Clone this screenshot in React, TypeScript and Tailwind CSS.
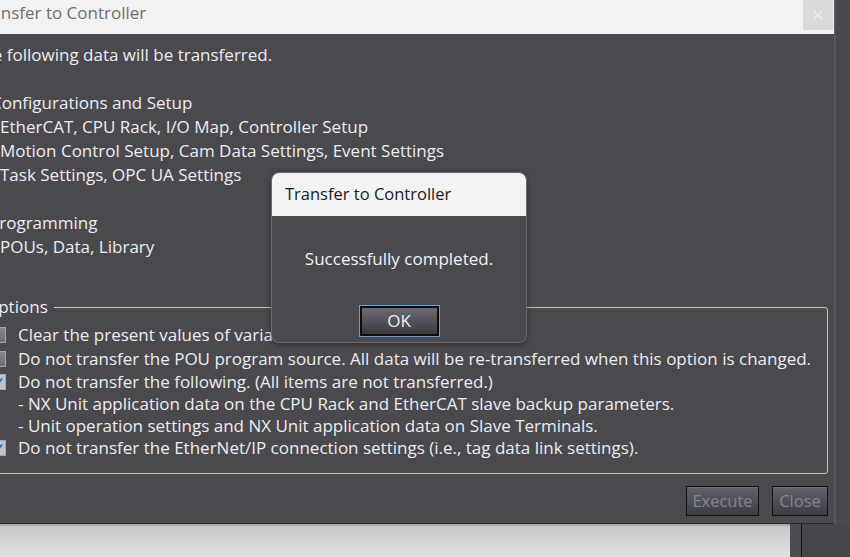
import React from 'react'

function Box({ checked }: { checked?: boolean }) {
  return (
    <span
      className={`w-[16px] h-[16px] shrink-0 border border-[#a6a6aa] flex items-center justify-center ${
        checked ? 'bg-[#bcc4d2]' : 'bg-gradient-to-b from-[#8a8a8e] to-[#6c6c70]'
      }`}
    >
      {checked && (
        <svg width="12" height="12" viewBox="0 0 12 12">
          <path d="M2 6.5 L4.8 9.2 L10 2.5" fill="none" stroke="#3d72b8" strokeWidth="2" />
        </svg>
      )}
    </span>
  )
}

function Row({ checked, h, children }: { checked?: boolean; h: string; children: React.ReactNode }) {
  return (
    <div className={`flex items-center gap-[12px] ${h}`}>
      <Box checked={checked} />
      <span className="whitespace-nowrap">{children}</span>
    </div>
  )
}

function Btn({ label, w }: { label: string; w: string }) {
  return (
    <button
      disabled
      className={`${w} h-[30px] border border-[#131316] bg-gradient-to-b from-[#616169] to-[#3d3d45] shadow-[inset_0_1px_0_rgba(255,255,255,0.08)] text-[16.5px] leading-none text-[#84848c]`}
    >
      {label}
    </button>
  )
}

export default function App() {
  return (
    <div className="relative w-[850px] h-[557px] overflow-hidden bg-[#4a494e] flex flex-col font-['Open_Sans',sans-serif]">
      <div className="flex h-[524px]">
        {/* main window */}
        <div className="w-[834px] flex flex-col border-b border-[#2a292e]">
          <div className="h-[34px] shrink-0 bg-[#f2f2f2] flex justify-between">
            <span className="ml-[-25px] text-[17px] leading-[25px] text-[#6f6f6f] whitespace-nowrap">
              Transfer to Controller
            </span>
            <div className="w-[30px] h-[30px] mr-[1px] bg-[#dadada] flex items-center justify-center">
              <svg width="12" height="12" viewBox="0 0 12 12">
                <path d="M2 2 L10 10 M10 2 L2 10" stroke="#ececec" strokeWidth="1.6" />
              </svg>
            </div>
          </div>

          <div className="flex-1 flex flex-col ml-[-27px] pr-[6px] pt-[9px] text-[17px] leading-[24px] text-[#ededf2]">
            <div className="whitespace-nowrap">The following data will be transferred.</div>
            <div className="h-[24px]" />
            <div className="pl-[18px] whitespace-nowrap">Configurations and Setup</div>
            <div className="pl-[27px] whitespace-nowrap">EtherCAT, CPU Rack, I/O Map, Controller Setup</div>
            <div className="pl-[27px] whitespace-nowrap">Motion Control Setup, Cam Data Settings, Event Settings</div>
            <div className="pl-[27px] whitespace-nowrap">Task Settings, OPC UA Settings</div>
            <div className="h-[24px]" />
            <div className="pl-[16px] whitespace-nowrap">Programming</div>
            <div className="pl-[27px] whitespace-nowrap">POUs, Data, Library</div>

            <fieldset className="mt-[36px] ml-[7px] border border-[#c6c6b4] rounded-[3px] pb-[14px]">
              <legend className="ml-[4px] pr-[6px] leading-[24px]">Options</legend>
              <div className="pl-[9px] pt-[4px]">
                <Row h="h-[24px]">Clear the present values of variables with the Retain attribute.</Row>
                <Row h="h-[24px]">
                  Do not transfer the POU program source. All data will be re-transferred when this option is changed.
                </Row>
                <Row h="h-[22px]" checked>
                  Do not transfer the following. (All items are not transferred.)
                </Row>
                <div className="h-[22px] flex items-center pl-[28px] whitespace-nowrap">
                  - NX Unit application data on the CPU Rack and EtherCAT slave backup parameters.
                </div>
                <div className="h-[22px] flex items-center pl-[28px] whitespace-nowrap">
                  - Unit operation settings and NX Unit application data on Slave Terminals.
                </div>
                <Row h="h-[22px]" checked>
                  Do not transfer the EtherNet/IP connection settings (i.e., tag data link settings).
                </Row>
              </div>
            </fieldset>

            <div className="flex justify-end gap-[13px] mt-[12px]">
              <Btn label="Execute" w="w-[73px]" />
              <Btn label="Close" w="w-[56px]" />
            </div>
          </div>
        </div>
        <div className="w-[2px] bg-[#58575c]" />
        <div className="flex-1 bg-[#49484d]" />
      </div>

      <div className="flex flex-1">
        <div className="w-[790px] border-t-2 border-[#a9a9a9] bg-gradient-to-b from-[#c8c8c8] to-[#e1e1e1]" />
        <div className="w-[11px] bg-[#4c4b50]" />
        <div className="w-[1px] bg-[#141414]" />
        <div className="flex-1 bg-[#47464b]" />
      </div>

      {/* message box */}
      <div className="absolute left-[271px] top-[172px] w-[256px] h-[171px] rounded-[8px] border border-[#6a696f] overflow-hidden flex flex-col shadow-[0_2px_6px_rgba(0,0,0,0.35)]">
        <div className="h-[43px] shrink-0 bg-[#f3f3f3] pl-[13px] flex items-center text-[16.5px] text-[#1a1a1a]">
          Transfer to Controller
        </div>
        <div className="flex-1 bg-[#4a494e] flex flex-col items-center pt-[31px]">
          <div className="text-[17px] leading-[24px] text-[#f2f2f6]">Successfully completed.</div>
          <button className="mt-[34px] w-[81px] h-[32px] border border-[#5aa6ec] p-0">
            <span className="flex w-full h-full items-center justify-center border-2 border-[#0d0d10] bg-gradient-to-b from-[#6b6b73] to-[#3a3a42] text-[17px] text-[#f0f0f0]">
              OK
            </span>
          </button>
        </div>
      </div>
    </div>
  )
}
